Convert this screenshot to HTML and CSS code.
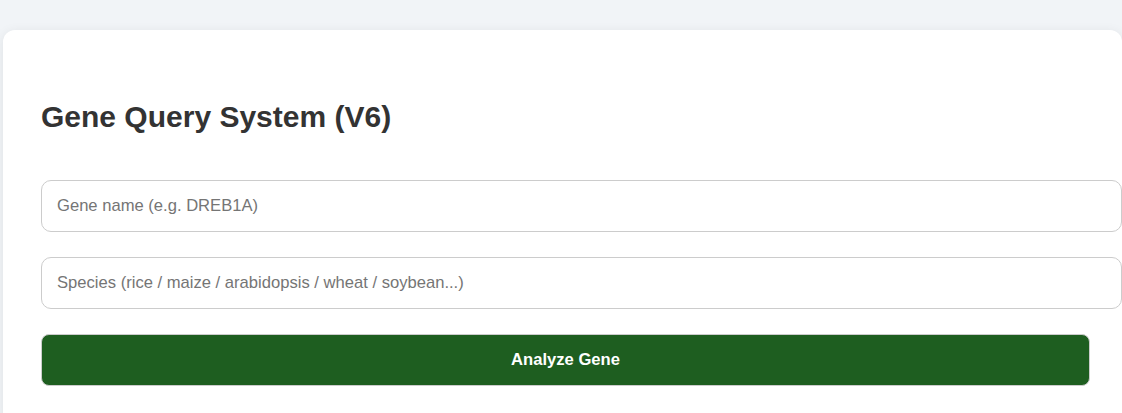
FILE: index.html
```html
<!DOCTYPE html>
<html lang="en">

<head>
    <meta charset="UTF-8">
    <meta name="viewport" content="width=device-width, initial-scale=1.0">
    <title>Gene Query System</title>
    <link rel="stylesheet" href="styles.css">
</head>

<body>
    <div class="container">
        <h1>Gene Query System (V6)</h1>

        <input type="text" id="geneName" placeholder="Gene name (e.g. DREB1A)">
        <input type="text" id="species" placeholder="Species (rice / maize / arabidopsis / wheat / soybean...)">

        <button id="analyzeBtn">Analyze Gene</button>
    </div>
</body>

</html>
```

FILE: styles.css
```css
html,
body {
    overflow: hidden;
}

body {
    font-family: Arial, "Liberation Sans", sans-serif;
    background-color: #f1f4f7;
    margin: 0;
    padding: 30px 0 0 3px;
}

.container {
    width: 1049px;
    background-color: #ffffff;
    border-radius: 12px;
    padding: 40px 32px 40px 38px;
    box-shadow: 0 2px 12px rgba(0, 0, 0, 0.08);
}

h1 {
    font-size: 30px;
    color: #333;
    margin: 30px 0 46px;
}

input {
    display: block;
    width: 100%;
    height: 20px;
    padding: 15px;
    margin-bottom: 25px;
    font-family: Arial, "Liberation Sans", sans-serif;
    font-size: 16.6px;
    border: 1px solid #ccc;
    border-radius: 10px;
    color: #333;
}

input::placeholder {
    color: #757575;
}

button {
    display: block;
    width: 100%;
    height: 52px;
    background-color: #1e5e20;
    color: #fff;
    font-family: Arial, "Liberation Sans", sans-serif;
    font-size: 16.6px;
    font-weight: bold;
    border: 1px solid #ccc;
    border-radius: 8px;
    cursor: pointer;
}
```
